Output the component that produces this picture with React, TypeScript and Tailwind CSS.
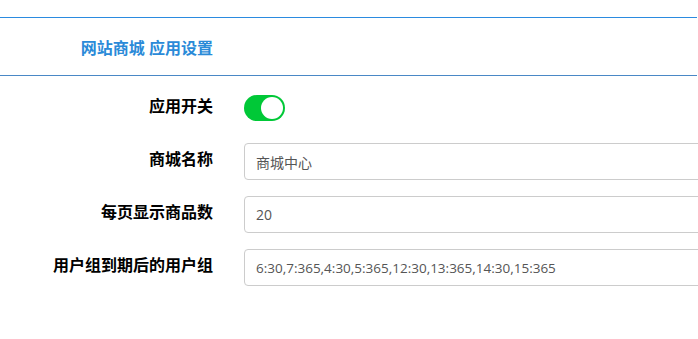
import React from "react";

const font = { fontFamily: '"Open Sans", "Noto Sans CJK SC", sans-serif' };

function Row({ label, children }: { label: string; children: React.ReactNode }) {
  return (
    <div className="flex items-center">
      <div className="w-[213px] shrink-0 text-right text-[16px] font-bold text-black leading-none pb-[5px]">
        {label}
      </div>
      <div className="ml-[31px] flex-1 min-w-0">{children}</div>
    </div>
  );
}

function Field({ value, small }: { value: string; small?: boolean }) {
  return (
    <input
      readOnly
      value={value}
      className={
        "block w-[480px] h-[37px] border border-[#cccccc] rounded-[4px] px-[11px] text-[#555555] bg-white outline-none " +
        (small ? "text-[13.5px]" : "text-[14px]")
      }
      style={font}
    />
  );
}

export default function App() {
  return (
    <div className="w-[698px] h-[339px] overflow-hidden bg-white" style={font}>
      <div className="pt-[17px]">
        <div className="w-[697px] h-[59px] border-t border-b border-t-[#2b8be0] border-b-[#4a88c6] flex items-center">
          <div className="w-[213px] text-right text-[16px] font-semibold text-[#2a8ad8] pt-[3px] leading-none">
            网站商城 应用设置
          </div>
        </div>
      </div>
      <div className="flex flex-col">
        <div className="mt-[19px]">
          <Row label="应用开关">
            <div className="w-[41px] h-[26px] rounded-full bg-[#00c837] p-[2px] flex justify-end">
              <div className="w-[22px] h-[22px] rounded-full bg-white" />
            </div>
          </Row>
        </div>
        <div className="mt-[22px] flex flex-col gap-[16px]">
          <Row label="商城名称">
            <Field value="商城中心" />
          </Row>
          <Row label="每页显示商品数">
            <Field value="20" />
          </Row>
          <Row label="用户组到期后的用户组">
            <Field value="6:30,7:365,4:30,5:365,12:30,13:365,14:30,15:365" small />
          </Row>
        </div>
      </div>
    </div>
  );
}
